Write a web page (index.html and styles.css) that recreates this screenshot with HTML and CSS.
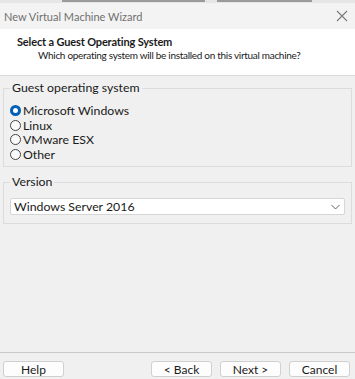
FILE: index.html
```html
<!DOCTYPE html>
<html lang="en">
<head>
    <meta charset="UTF-8">
    <title>New Virtual Machine Wizard</title>
    <link rel="stylesheet" href="styles.css">
</head>
<body>
    <div class="window">
        <div class="top-strip">
            <span class="strip-a"></span>
            <span class="strip-b"></span>
        </div>
        <div class="titlebar">
            <span class="title">New Virtual Machine Wizard</span>
            <svg class="close" width="12" height="12" viewBox="0 0 12 12">
                <path d="M1 1 L11 11 M11 1 L1 11" stroke="#7a7a7a" stroke-width="1.1" fill="none"/>
            </svg>
        </div>
        <header class="wizard-header">
            <h1>Select a Guest Operating System</h1>
            <p>Which operating system will be installed on this virtual machine?</p>
        </header>
        <main class="wizard-body">
            <fieldset class="group group-os">
                <legend>Guest operating system</legend>
                <label class="radio checked"><span class="dot"></span>Microsoft Windows</label>
                <label class="radio"><span class="dot"></span>Linux</label>
                <label class="radio"><span class="dot"></span>VMware ESX</label>
                <label class="radio"><span class="dot"></span>Other</label>
            </fieldset>
            <fieldset class="group group-version">
                <legend>Version</legend>
                <div class="select">
                    <span>Windows Server 2016</span>
                    <svg width="9" height="6" viewBox="0 0 9 6">
                        <path d="M0.5 1 L4.5 5 L8.5 1" stroke="#666" stroke-width="1" fill="none"/>
                    </svg>
                </div>
            </fieldset>
        </main>
        <footer class="wizard-footer">
            <button class="button">Help</button>
            <div class="spacer"></div>
            <button class="button">&lt; Back</button>
            <button class="button">Next &gt;</button>
            <button class="button">Cancel</button>
        </footer>
    </div>
</body>
</html>
```

FILE: styles.css
```css
body {
    margin: 0;
    padding: 0;
    background-color: #f0f0f0;
    font-family: 'Lato', 'Noto Sans', sans-serif;
    font-size: 12.3px;
    color: #1a1a1a;
}
.window {
    display: flex;
    flex-direction: column;
    width: 355px;
    height: 379px;
    overflow: hidden;
}
.top-strip {
    height: 3px;
    background-color: #e6e6e6;
    position: relative;
}
.strip-a,
.strip-b {
    position: absolute;
    top: 0;
    height: 2px;
    background-color: #9a9a9a;
}
.strip-a {
    left: 62px;
    width: 143px;
}
.strip-b {
    left: 217px;
    width: 95px;
}
.titlebar {
    height: 26px;
    display: flex;
    align-items: center;
    justify-content: space-between;
    padding: 0 7px 0 4px;
    background-color: #f3f3f3;
}
.title {
    font-size: 11px;
    color: #707070;
}
.wizard-header {
    height: 47px;
    background-color: #ffffff;
    border-bottom: 1px solid #dadada;
    padding: 6px 0 0 17px;
    box-sizing: border-box;
}
.wizard-header h1 {
    margin: 0;
    font-size: 11px;
    font-weight: bold;
    letter-spacing: -0.15px;
    line-height: 13px;
}
.wizard-header p {
    margin: 0;
    padding-left: 21px;
    font-size: 10px;
    letter-spacing: -0.3px;
    white-space: nowrap;
    line-height: 14px;
}
.wizard-body {
    flex: 1;
    padding: 5px 3px 0 3px;
}
.group {
    margin: 0;
    padding: 0 6px;
    border: 1px solid #dcdcdc;
}
.group legend {
    padding: 0 2px;
    margin-left: 0;
    line-height: 14px;
}
.group-os {
    height: 86px;
    box-sizing: border-box;
    padding-top: 8px;
}
.radio {
    display: flex;
    align-items: center;
    height: 14.7px;
    gap: 2px;
}
.dot {
    width: 11px;
    height: 11px;
    border: 1px solid #444;
    border-radius: 50%;
    background-color: #fafafa;
    box-sizing: border-box;
}
.radio.checked .dot {
    border: 3px solid #005fb8;
    background-color: #ffffff;
}
.group-version {
    margin-top: 8px;
    height: 49px;
    box-sizing: border-box;
    padding-top: 9px;
}
.select {
    display: flex;
    align-items: center;
    justify-content: space-between;
    height: 15px;
    background-color: #ffffff;
    border: 1px solid #d6d6d6;
    border-radius: 2px;
    padding: 0 4px 0 3px;
}
.wizard-footer {
    display: flex;
    gap: 8px;
    border-top: 1px solid #c8c8c8;
    padding: 8px 5px 2px 3px;
    height: 27px;
    box-sizing: border-box;
}
.spacer {
    flex: 1;
}
.button {
    width: 61px;
    height: 16px;
    padding: 0;
    font-family: 'Lato', 'Noto Sans', sans-serif;
    font-size: 12px;
    color: #1a1a1a;
    background-color: #fdfdfd;
    border: 1px solid #d0d0d0;
    border-radius: 3px;
}
```
